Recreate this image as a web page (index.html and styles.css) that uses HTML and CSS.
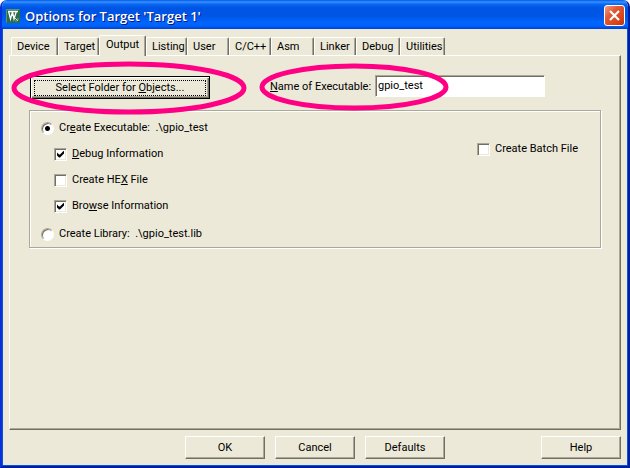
FILE: index.html
```html
<!DOCTYPE html>
<html lang="en">
<head>
<meta charset="utf-8">
<title>Options for Target 'Target 1'</title>
<link rel="stylesheet" href="styles.css">
</head>
<body>
<main class="window">
  <header class="titlebar">
    <svg class="app-icon" viewBox="0 0 14 14" aria-hidden="true">
      <rect width="14" height="14" fill="#2c6b4c"/>
      <path d="M.5 13.500V.5H13.500" fill="none" stroke="#5d9478"/>
      <path d="M2.500 2L4.500 10L6.500 3L8 10L10.500 2M2 2.500H12M6.500 2V7" fill="none" stroke="#fff" stroke-width="1.300"/>
      <path d="M9 9L12 12M12 9.500V10.500M9.500 12H10.500" stroke="#c5dccf" fill="none"/>
    </svg>
    <h1 class="title">Options for Target 'Target 1'</h1>
    <button class="close" type="button" aria-label="Close">
      <svg viewBox="0 0 17 17" aria-hidden="true"><path d="M4 4L13 13M13 4L4 13" stroke="#fff" stroke-width="2.200" fill="none"/></svg>
    </button>
  </header>
  <form class="content">
    <nav class="tabs" role="tablist">
      <button class="tab" type="button" role="tab">Device</button>
      <button class="tab" type="button" role="tab">Target</button>
      <button class="tab active" type="button" role="tab" aria-selected="true">Output</button>
      <button class="tab" type="button" role="tab">Listing</button>
      <button class="tab" type="button" role="tab">User</button>
      <button class="tab" type="button" role="tab">C/C++</button>
      <button class="tab" type="button" role="tab">Asm</button>
      <button class="tab" type="button" role="tab">Linker</button>
      <button class="tab" type="button" role="tab">Debug</button>
      <button class="tab" type="button" role="tab">Utilities</button>
    </nav>
    <section class="page" role="tabpanel">
      <div class="toprow">
        <div class="folder">
          <button class="btn default" type="button"><span class="focus">Select Folder for <u>O</u>bjects...</span></button>
          <svg class="ring ring-folder" viewBox="0 0 236 54" aria-hidden="true"><ellipse cx="118" cy="27" rx="115" ry="24"/></svg>
        </div>
        <div class="name">
          <label for="exe"><u>N</u>ame of Executable:</label>
          <input class="text" id="exe" type="text" value="gpio_test">
          <svg class="ring ring-name" viewBox="0 0 190 48" aria-hidden="true"><ellipse cx="95" cy="24" rx="92" ry="21"/></svg>
        </div>
      </div>
      <div class="group">
        <div class="options">
          <label class="option"><input class="radio" type="radio" name="kind" checked><span>Cr<u>e</u>ate Executable:&nbsp; .\gpio_test</span></label>
          <div class="sub">
            <label class="option"><input class="check" type="checkbox" checked><span><u>D</u>ebug Information</span></label>
            <label class="option"><input class="check" type="checkbox"><span>Create HE<u>X</u> File</span></label>
            <label class="option"><input class="check" type="checkbox" checked><span>Bro<u>w</u>se Information</span></label>
          </div>
          <label class="option"><input class="radio" type="radio" name="kind"><span>Create Library:&nbsp; .\gpio_test.lib</span></label>
        </div>
        <label class="option batch"><input class="check" type="checkbox"><span>Create Batch File</span></label>
      </div>
    </section>
    <footer class="actions">
      <button class="btn" type="button">OK</button>
      <button class="btn" type="button">Cancel</button>
      <button class="btn" type="button">Defaults</button>
      <button class="btn help" type="button">Help</button>
    </footer>
  </form>
</main>
</body>
</html>
```

FILE: styles.css
```css
* { box-sizing: border-box; }
body {
  margin: 0;
  background: #fff;
  color: #000;
  font: 11px/16px Roboto, "Liberation Sans", sans-serif;
}
button, input { font: inherit; color: inherit; margin: 0; }
u { text-decoration: underline; text-underline-offset: 1px; text-decoration-thickness: 1px; }

.window {
  display: flex;
  flex-direction: column;
  min-height: 100vh;
  border: solid #0831d9;
  border-width: 0 2px 2px;
  border-right-color: #001ea0;
  border-bottom-color: #001ea0;
  border-radius: 7px 7px 0 0;
  background: #ece9d8;
  overflow: hidden;
}
.titlebar {
  display: flex;
  align-items: center;
  gap: 5px;
  height: 29px;
  padding: 2px 3px 0 4px;
  background: linear-gradient(#0058e6 0, #3a93ff 2px, #0a6af5 4px, #0054e3 8px, #0055e5 16px, #0066ff 23px, #0062f8 26px, #003dd7 29px);
}
.app-icon { width: 14px; height: 14px; }
.title {
  flex: 1;
  margin: 0;
  color: #fff;
  font: 600 13px/18px "Open Sans", sans-serif;
  text-shadow: 1px 1px #0a1883;
}
.close {
  display: flex;
  width: 21px;
  height: 21px;
  padding: 1px;
  border: 1px solid #fff;
  border-radius: 3px;
  background: linear-gradient(135deg, #f0a088, #e25a36 35%, #d84418 75%, #b83410);
}
.close svg { width: 17px; height: 17px; }

.content {
  display: flex;
  flex: 1;
  flex-direction: column;
  padding: 6px;
  border: solid #0855dd;
  border-width: 0 1px 1px;
}
.tabs {
  display: grid;
  grid-template-columns: 47px 41px 47px 41px 42px 42px 43px 42px 44px 45px;
  align-items: end;
  height: 20px;
  padding-left: 2px;
}
.tab {
  height: 18px;
  padding: 0 0 0 5px;
  border: solid;
  border-width: 1px 1px 0;
  border-color: #fff #716f64 #fff #fff;
  border-radius: 2px 2px 0 0;
  background: #ece9d8;
  box-shadow: inset -1px 0 #aca899;
  text-align: left;
  white-space: nowrap;
}
.tab.active { z-index: 1; height: 21px; margin-bottom: -1px; padding: 0 0 3px 6px; }

.page {
  flex: 1;
  border: 1px solid;
  border-color: #fff #716f64 #716f64 #fff;
  box-shadow: inset -1px -1px #aca899;
  padding: 19px 19px 0;
}
.toprow { display: flex; gap: 60px; padding-left: 1px; }
.folder, .name { position: relative; }
.btn {
  width: 80px;
  height: 23px;
  padding: 0;
  border: 1px solid;
  border-color: #fff #716f64 #716f64 #fff;
  background: #ece9d8;
  box-shadow: inset -1px -1px #aca899;
}
.btn.default {
  display: block;
  width: 180px;
  margin-top: 1px;
  padding: 2px;
  border-color: #000;
  box-shadow: inset 1px 1px #fff, inset -1px -1px #716f64, inset -2px -2px #aca899;
}
.focus { display: block; border: 1px dotted #000; height: 16px; line-height: 14px; margin: 0 1px; }
.name { display: flex; gap: 5px; height: 22px; }
.name label { width: 100px; padding-top: 4px; white-space: nowrap; }
.text {
  width: 170px;
  height: 22px;
  padding: 0 2px 2px;
  border: 1px solid;
  border-color: #aca899 #fff #fff #aca899;
  box-shadow: inset 1px 1px #716f64;
  background: #fff;
  outline: 0;
}
.ring { position: absolute; pointer-events: none; fill: none; stroke: #ff0084; stroke-width: 5px; overflow: visible; }
.ring-folder { left: -19px; top: -14px; width: 236px; height: 54px; }
.ring-name { left: -11px; top: -12px; width: 190px; height: 48px; }

.group {
  display: flex;
  justify-content: space-between;
  margin-top: 11px;
  padding: 8px 22px 4px 11px;
  border: 1px solid #aca899;
  box-shadow: 1px 1px #fff, inset 1px 1px #fff;
}
.option { display: flex; align-items: center; gap: 5px; height: 18px; }
.sub { display: grid; gap: 8px; padding: 8px 0 10px 13px; }
.batch { margin-top: 21px; }
.check, .radio { appearance: none; flex: none; width: 13px; height: 13px; background: #fff; }
.check {
  border: 1px solid;
  border-color: #aca899 #fff #fff #aca899;
  box-shadow: inset 1px 1px #716f64, inset -1px -1px #ece9d8;
}
.check:checked::before {
  content: "";
  display: block;
  width: 7px;
  height: 7px;
  margin: 2px;
  background: #000;
  clip-path: polygon(0 2px, 2px 4px, 3px 4px, 7px 0, 7px 3px, 3px 7px, 2px 7px, 0 5px);
}
.radio {
  border: 1px solid;
  border-color: #aca899 #fff #fff #aca899;
  border-radius: 50%;
  box-shadow: inset 1px 1px #716f64;
}
.radio:checked { background: radial-gradient(circle, #000 2px, #fff 3px); }

.actions { display: flex; gap: 10px; padding: 6px 0 0 176px; }
.help { margin-left: auto; }
```
